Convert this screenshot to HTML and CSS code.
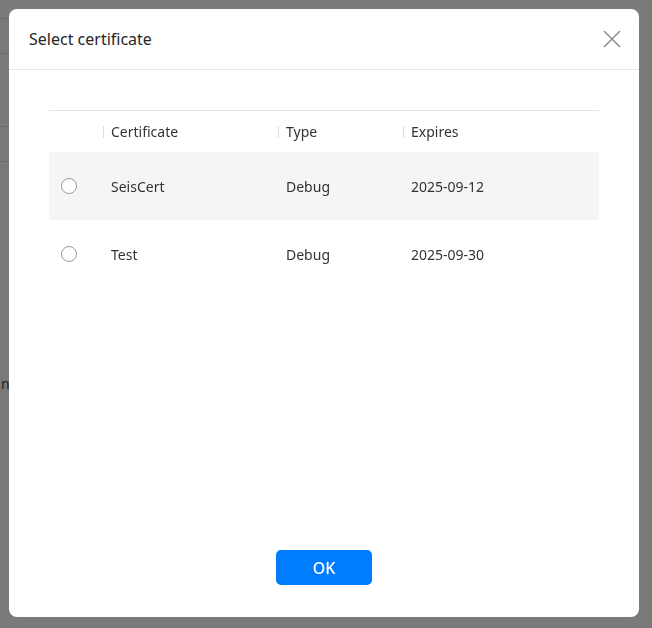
FILE: index.html
```html
<!DOCTYPE html>
<html>
<head>
<meta charset="utf-8">
<link rel="stylesheet" href="styles.css">
</head>
<body>
<div class="page">
  <div class="bg-line l1"></div>
  <div class="bg-line l2"></div>
  <div class="bg-line l3"></div>
  <div class="bg-line l4"></div>
  <div class="bg-text">n</div>
</div>
<div class="overlay">
  <div class="dialog">
    <div class="dialog-header">
      <span class="dialog-title">Select certificate</span>
      <svg class="close" width="18" height="18" viewBox="0 0 18 18">
        <path d="M1 1 L17 17 M17 1 L1 17" stroke="#8c8c8c" stroke-width="1.5" fill="none"/>
      </svg>
    </div>
    <div class="dialog-body">
      <div class="table">
        <div class="row head">
          <div class="cell c0"></div>
          <div class="cell c1"><span class="sep"></span>Certificate</div>
          <div class="cell c2"><span class="sep"></span>Type</div>
          <div class="cell c3"><span class="sep"></span>Expires</div>
        </div>
        <div class="row data hover">
          <div class="cell c0"><span class="radio"></span></div>
          <div class="cell c1">SeisCert</div>
          <div class="cell c2">Debug</div>
          <div class="cell c3">2025-09-12</div>
        </div>
        <div class="row data">
          <div class="cell c0"><span class="radio"></span></div>
          <div class="cell c1">Test</div>
          <div class="cell c2">Debug</div>
          <div class="cell c3">2025-09-30</div>
        </div>
      </div>
    </div>
    <div class="dialog-footer">
      <button class="ok">OK</button>
    </div>
  </div>
</div>
</body>
</html>
```
FILE: styles.css
```css
html, body {
  margin: 0;
  padding: 0;
  width: 652px;
  height: 628px;
  overflow: hidden;
  background: #7a7a7a;
  font-family: "Noto Sans", "Open Sans", sans-serif;
}
.page {
  position: absolute;
  inset: 0;
}
.bg-line {
  position: absolute;
  left: 0;
  width: 30px;
  height: 1px;
  background: #6c6c6c;
}
.l1 { top: 18px; }
.l2 { top: 53px; }
.l3 { top: 126px; }
.l4 { top: 161px; }
.bg-text {
  position: absolute;
  left: 1px;
  top: 374px;
  font-size: 14px;
  color: #1a1a1a;
}
.overlay {
  position: fixed;
  inset: 0;
  padding: 9px 13px 11px 9px;
  box-sizing: border-box;
}
.dialog {
  width: 630px;
  height: 608px;
  background: #fff;
  border-radius: 8px;
  display: flex;
  flex-direction: column;
}
.dialog-header {
  height: 60px;
  border-bottom: 1px solid #e6e6e6;
  display: flex;
  align-items: center;
  justify-content: space-between;
  padding: 0 18px 0 20px;
  flex-shrink: 0;
}
.dialog-title {
  font-size: 16px;
  color: #262626;
}
.close {
  display: block;
}
.dialog-body {
  flex: 1;
  padding: 40px 40px 0 40px;
}
.table {
  border-top: 1px solid #e3e3e3;
}
.row {
  display: grid;
  grid-template-columns: 54px 175px 125px 196px;
  align-items: center;
  font-size: 14px;
  color: #333;
}
.row.head {
  height: 41px;
}
.row.data {
  height: 68px;
}
.row.hover {
  background: #f5f5f5;
}
.cell {
  display: flex;
  align-items: center;
  padding-left: 8px;
  position: relative;
}
.cell.c0 {
  padding-left: 12px;
}
.sep {
  position: absolute;
  left: 0;
  top: 50%;
  width: 1px;
  height: 12px;
  margin-top: -6px;
  background: #dcdcdc;
}
.radio {
  width: 14px;
  height: 14px;
  border: 1px solid #9a9a9a;
  border-radius: 50%;
  background: #fff;
  display: block;
}
.dialog-footer {
  display: flex;
  justify-content: center;
  padding-bottom: 32px;
}
.ok {
  width: 96px;
  height: 35px;
  border: none;
  border-radius: 5px;
  background: #007dff;
  color: #fff;
  font-family: "Noto Sans", "Open Sans", sans-serif;
  font-size: 16px;
  font-weight: 500;
  padding: 0;
}
```
